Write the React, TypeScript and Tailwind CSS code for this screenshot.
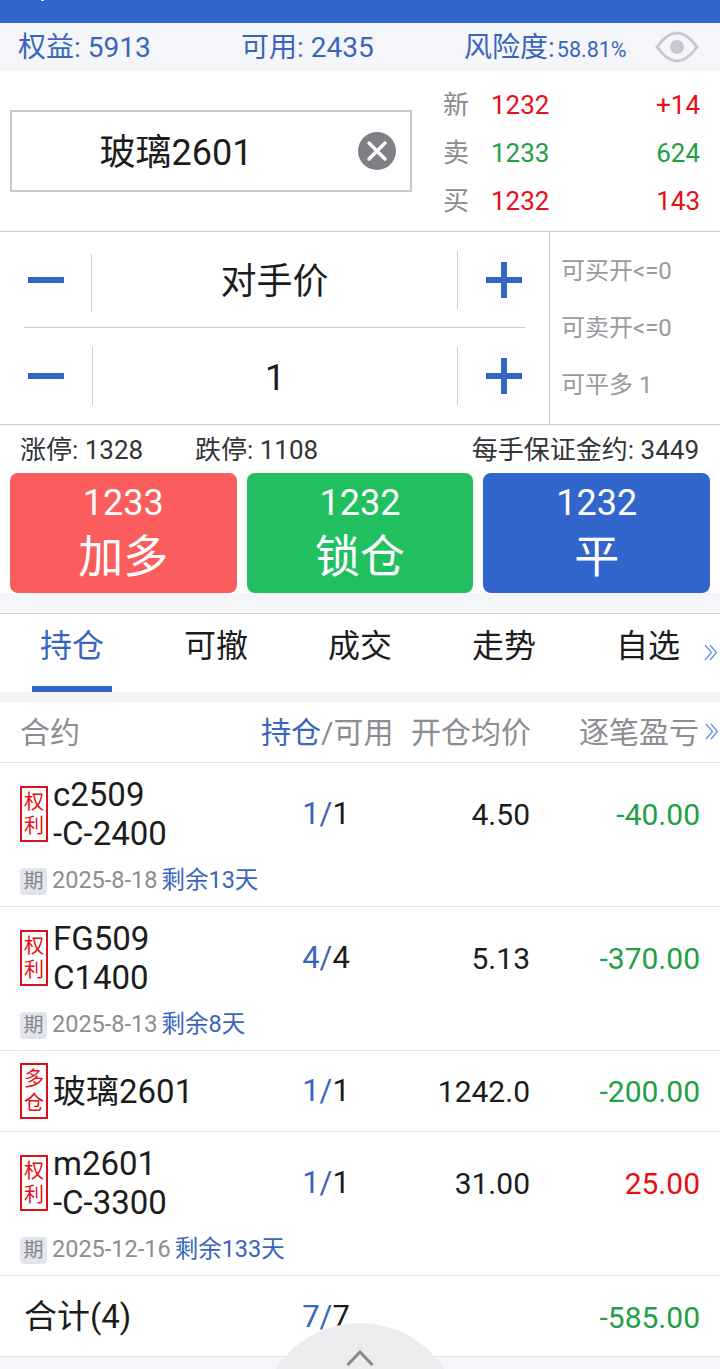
import { X } from "lucide-react";

const BLUE = "text-[#3866bd]";
const RED = "text-[#e60f16]";
const GREEN = "text-[#1fa045]";

type Position = {
  tag: [string, string];
  name: string[];
  pos: string;
  price: string;
  pnl: string;
  up?: boolean;
  date?: string;
  left?: string;
};

const positions: Position[] = [
  { tag: ["权", "利"], name: ["c2509", "-C-2400"], pos: "1", price: "4.50", pnl: "-40.00", date: "2025-8-18", left: "剩余13天" },
  { tag: ["权", "利"], name: ["FG509", "C1400"], pos: "4", price: "5.13", pnl: "-370.00", date: "2025-8-13", left: "剩余8天" },
  { tag: ["多", "仓"], name: ["玻璃2601"], pos: "1", price: "1242.0", pnl: "-200.00" },
  { tag: ["权", "利"], name: ["m2601", "-C-3300"], pos: "1", price: "31.00", pnl: "25.00", up: true, date: "2025-12-16", left: "剩余133天" },
];

function MoreArrows({ className }: { className: string }) {
  return (
    <svg viewBox="0 0 14 17" fill="none" stroke="#5f8ad6" strokeWidth="1.2" className={`absolute h-[17px] w-[14px] ${className}`}>
      <path d="M1 1l6.5 7.5L1 16M6 1l6.5 7.5L6 16" />
    </svg>
  );
}

function Quote({ label, price, extra, color }: { label: string; price: string; extra: string; color: string }) {
  return (
    <div className="flex h-[48px] items-center text-[26px]">
      <span className="w-[48px] text-[#888b90]">{label}</span>
      <span className={color}>{price}</span>
      <span className={`ml-auto ${color}`}>{extra}</span>
    </div>
  );
}

function Stepper({ label, height, leftCell, leftLine }: { label: string; height: string; leftCell: string; leftLine: string }) {
  return (
    <div className={`flex items-center ${height}`}>
      <div className={`flex items-center justify-center ${leftCell}`}>
        <div className="h-[6px] w-[36px] bg-[#3366c4]" />
      </div>
      <div className={`h-[58px] w-px bg-[#cfcfcf] ${leftLine}`} />
      <div className="flex-1 pt-[4px] text-center text-[36px] text-[#1c1c1c]">{label}</div>
      <div className="h-[58px] w-px bg-[#cfcfcf]" />
      <div className="flex w-[91px] justify-center">
        <svg viewBox="0 0 36 36" className="h-[36px] w-[36px]" fill="#3366c4">
          <path d="M0 15h36v6H0zM15 0h6v36h-6z" />
        </svg>
      </div>
    </div>
  );
}

function TradeButton({ price, label, bg }: { price: string; label: string; bg: string }) {
  return (
    <div className={`flex h-[120px] flex-col items-center rounded-[8px] text-white ${bg}`}>
      <div className="mt-[9px] text-[36px] leading-[42px]">{price}</div>
      <div className="mt-[6px] text-[45px] leading-[56px]">{label}</div>
    </div>
  );
}

function TagBadge({ tag }: { tag: [string, string] }) {
  return (
    <div className="flex h-[56px] w-[28px] flex-col items-center justify-center border-2 border-[#d8101c] text-[20px] leading-[24px] text-[#e60f16]">
      <span>{tag[0]}</span>
      <span>{tag[1]}</span>
    </div>
  );
}

function PositionRow({ row }: { row: Position }) {
  return (
    <div className="border-b border-[#e6e6e8] pl-[20px] pr-[20px]">
      <div className={`flex items-center ${row.date ? "mt-[12px] h-[78px]" : "h-[80px]"}`}>
        <TagBadge tag={row.tag} />
        <div className="ml-[5px] w-[228px] text-[33px] leading-[39px] text-[#1c1c1c]">
          {row.name.map((line) => (
            <div key={line}>{line}</div>
          ))}
        </div>
        <div className="w-[90px] pt-[1px] text-center text-[31px]">
          <span className={BLUE}>{row.pos}/</span>
          <span className="text-[#1c1c1c]">{row.pos}</span>
        </div>
        <div className="w-[159px] text-right text-[30px] text-[#1c1c1c]">{row.price}</div>
        <div className={`flex-1 text-right text-[30px] ${row.up ? RED : GREEN}`}>{row.pnl}</div>
      </div>
      {row.date && (
        <div className="mb-[11px] mt-[14px] flex h-[28px] items-center text-[23.5px]">
          <span className="flex h-[27px] w-[27px] items-center justify-center rounded-[4px] bg-[#e3e5ee] text-[20px] text-[#85878c]">期</span>
          <span className="ml-[5px] text-[#8b8d92]">{row.date}</span>
          <span className={`ml-[4px] ${BLUE}`}>{row.left}</span>
        </div>
      )}
    </div>
  );
}

export default function App() {
  return (
    <div className="relative h-[1369px] w-[720px] overflow-hidden bg-white font-[Roboto,'Noto_Sans_CJK_SC',sans-serif]">
      <div className="relative h-[23px] bg-[#3366cc]">
        {/* bottom edge of the clipped status bar text */}
        <div className="absolute left-[41px] top-0 h-px w-[3px] bg-white" />
      </div>

      {/* account summary */}
      <div className={`flex h-[48px] items-center bg-[#f5f6fa] pl-[18px] text-[28px] ${BLUE}`}>
        <span className="w-[223px] pt-[2px]">权益: 5913</span>
        <span className="w-[223px] pt-[2px]">可用: 2435</span>
        <span className="w-[191px] pt-[2px]">
          风险度:<span className="ml-[2px] text-[21.5px]">58.81%</span>
        </span>
        <svg viewBox="0 0 44 32" className="h-[32px] w-[44px]" fill="none">
          <path d="M2 16C9 6 15 2 22 2s13 4 20 14c-7 10-13 14-20 14S9 26 2 16Z" stroke="#c8c7d4" strokeWidth="3" />
          <circle cx="22" cy="16" r="7" fill="#c8c7d4" />
        </svg>
      </div>

      {/* contract + quotes */}
      <div className="flex h-[161px] items-center border-b border-[#c8c9cb]">
        <div className="ml-[10px] flex h-[82px] w-[402px] items-center border-2 border-[#c6cad0] pr-[14px]">
          <div className="mr-[18px] flex-1 pt-[4px] text-center text-[36px] text-[#1c1c1c]">玻璃2601</div>
          <div className="flex h-[38px] w-[38px] items-center justify-center rounded-full bg-[#7f7f85]">
            <X className="h-[32px] w-[32px] text-white" strokeWidth={2.6} />
          </div>
        </div>
        <div className="ml-[31px] flex-1 pr-[20px] pt-[4px]">
          <Quote label="新" price="1232" extra="+14" color={RED} />
          <Quote label="卖" price="1233" extra="624" color={GREEN} />
          <Quote label="买" price="1232" extra="143" color={RED} />
        </div>
      </div>

      {/* price and volume steppers */}
      <div className="flex h-[193px] border-b border-[#c8c9cb]">
        <div className="w-[549px]">
          <Stepper label="对手价" height="h-[95px]" leftCell="w-[91px]" leftLine="mt-[6px]" />
          <div className="mx-[24px] h-px bg-[#c8c9cb]" />
          <Stepper label="1" height="h-[96px]" leftCell="w-[92px]" leftLine="" />
        </div>
        <div className="flex flex-1 flex-col border-l border-[#c8c9cb] pl-[11px] pt-[11px] text-[24px] leading-[57px] text-[#9a9a9e]">
          <div>可买开&lt;=0</div>
          <div>可卖开&lt;=0</div>
          <div>可平多 1</div>
        </div>
      </div>

      {/* limits */}
      <div className="flex h-[48px] items-center pl-[20px] pr-[21px] pt-[2px] text-[26px] text-[#333438]">
        <span className="w-[175px]">涨停: 1328</span>
        <span>跌停: 1108</span>
        <span className="ml-auto">每手保证金约: 3449</span>
      </div>

      <div className="grid grid-cols-3 gap-[10px] px-[10px]">
        <TradeButton price="1233" label="加多" bg="bg-[#fb5d5d]" />
        <TradeButton price="1232" label="锁仓" bg="bg-[#20bf5f]" />
        <TradeButton price="1232" label="平" bg="bg-[#3366cc]" />
      </div>

      <div className="h-[20px] bg-[#f5f6fa]" />

      {/* tabs */}
      <div className="relative grid h-[79px] grid-cols-5 border-t border-[#cfd0d8] text-[32px] text-[#1c1c1c]">
        <div className={`relative pt-[8px] text-center ${BLUE}`}>
          持仓
          <div className="absolute bottom-0 left-[32px] h-[6px] w-[80px] bg-[#3366cc]" />
        </div>
        <div className="pt-[8px] text-center">可撤</div>
        <div className="pt-[8px] text-center">成交</div>
        <div className="pt-[8px] text-center">走势</div>
        <div className="pt-[8px] text-center">自选</div>
        <MoreArrows className="left-[704px] top-[30px]" />
      </div>

      <div className="h-[10px] bg-[#f5f5f7]" />

      {/* table header */}
      <div className="relative flex h-[61px] items-center border-b border-[#e6e6e8] pl-[20px] pr-[21px] pt-[1px] text-[30px] text-[#8b8d92]">
        <span className="w-[241px]">合约</span>
        <span className="w-[150px]">
          <span className={BLUE}>持仓</span>/可用
        </span>
        <span>开仓均价</span>
        <span className="ml-auto">逐笔盈亏</span>
        <MoreArrows className="left-[705px] top-[21px]" />
      </div>

      {positions.map((row) => (
        <PositionRow key={row.name[0]} row={row} />
      ))}

      {/* total */}
      <div className="flex h-[80px] items-center pl-[24px] pr-[20px] pt-[2px]">
        <span className="w-[257px] text-[33px] text-[#1c1c1c]">合计(4)</span>
        <span className="w-[90px] text-center text-[31px]">
          <span className={BLUE}>7/</span>
          <span className="text-[#1c1c1c]">7</span>
        </span>
        <span className={`ml-auto text-[30px] ${GREEN}`}>-585.00</span>
      </div>
      <div className="h-[14px] border-t border-[#e0e1e6] bg-[#f5f6fa]" />

      {/* pull-up handle */}
      <div className="absolute left-[260px] top-[1323px] flex h-[200px] w-[200px] justify-center rounded-full bg-[#ececee]">
        <svg viewBox="0 0 28 16" className="mt-[27px] h-[16px] w-[28px]" fill="none" stroke="#8a8a8a" strokeWidth="3">
          <path d="M1.5 15L14 2l12.5 13" />
        </svg>
      </div>
    </div>
  );
}
